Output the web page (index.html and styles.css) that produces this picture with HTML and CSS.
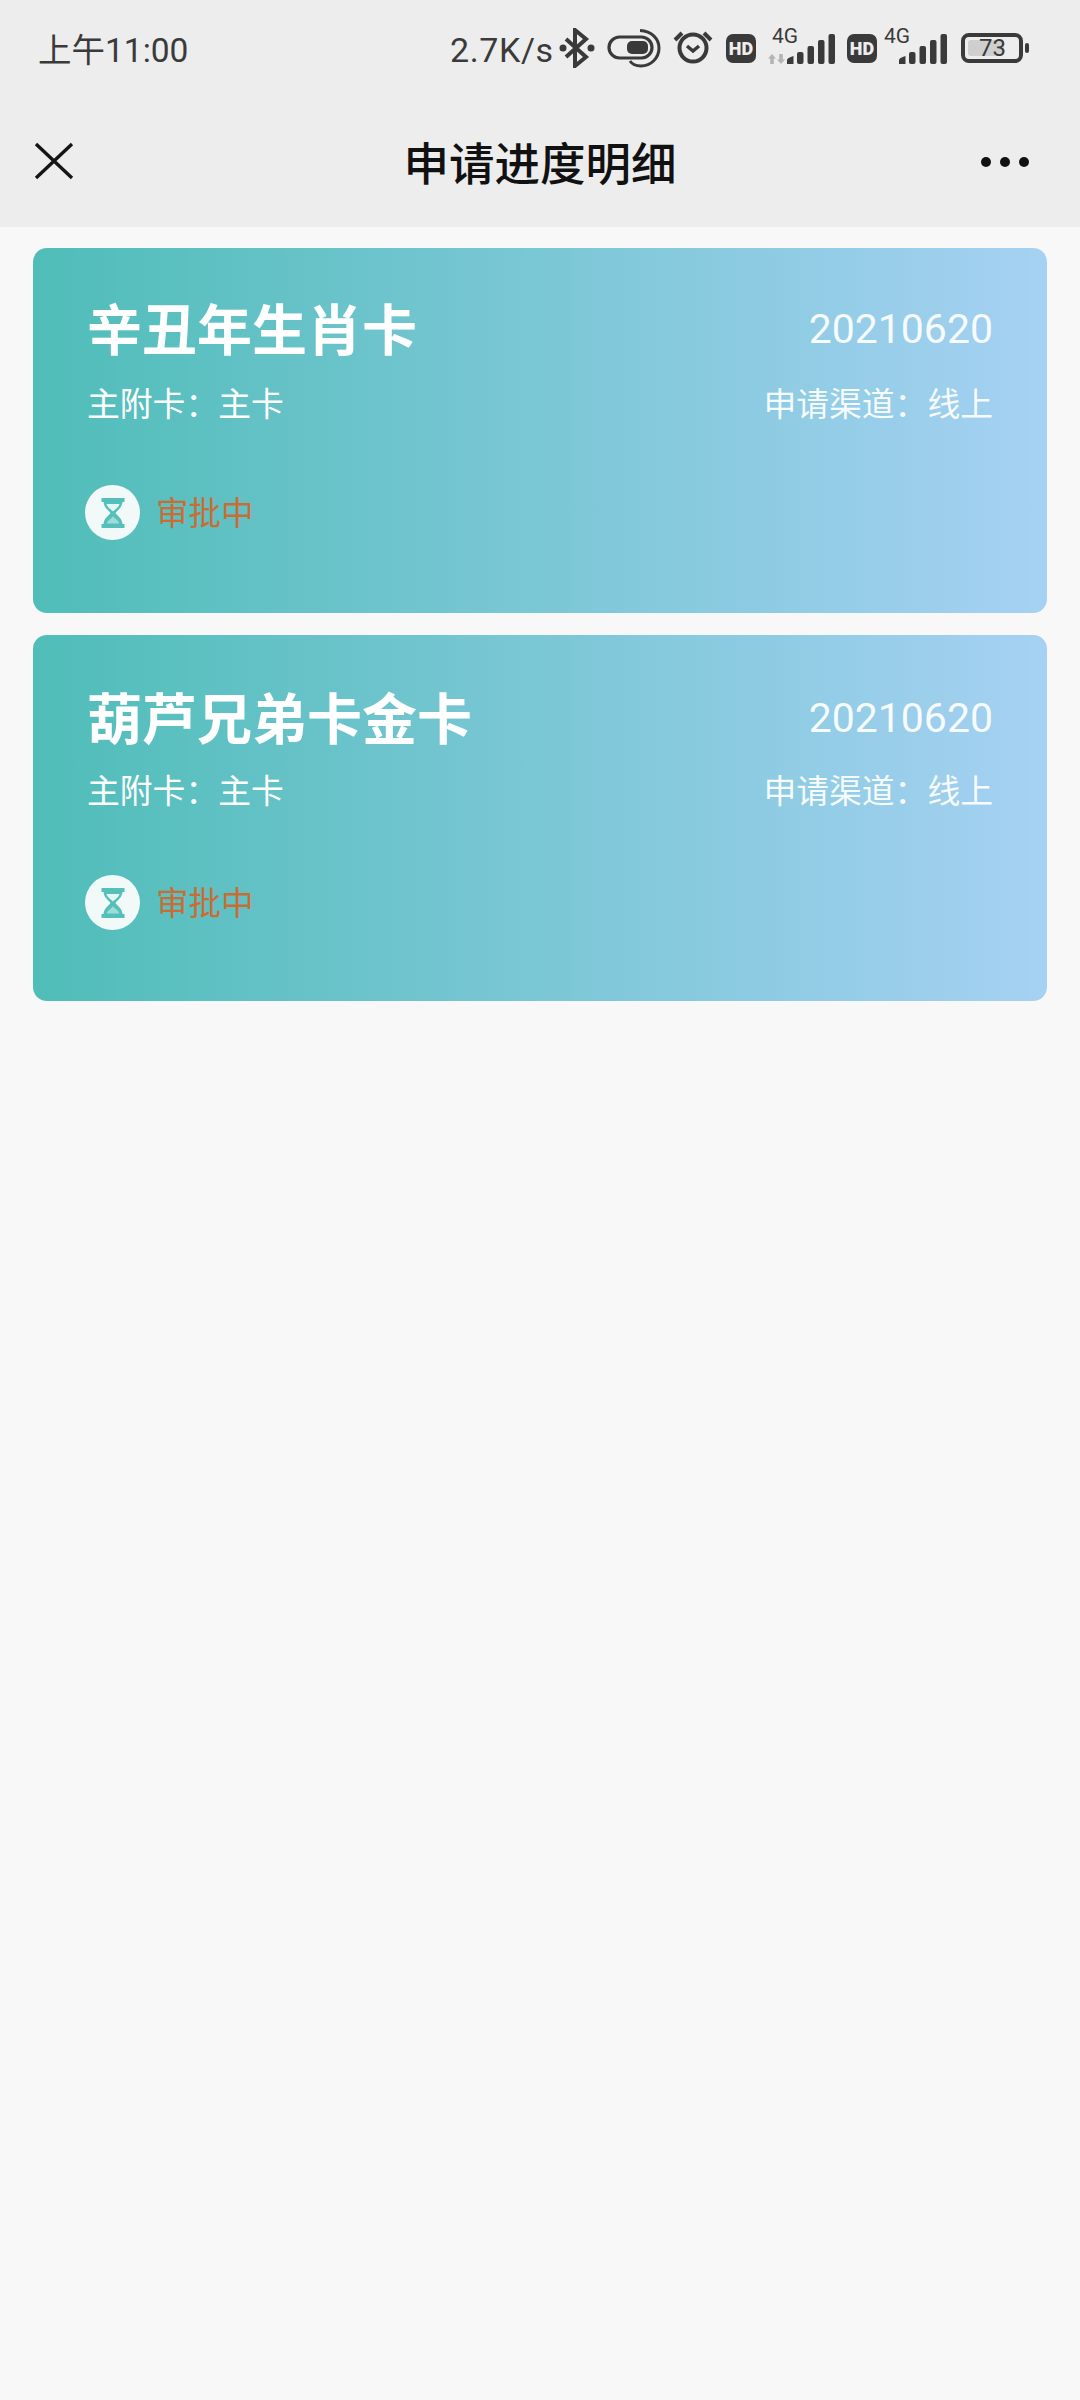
FILE: index.html
```html
<!DOCTYPE html>
<html lang="zh-CN">
<head>
<meta charset="utf-8">
<title>申请进度明细</title>
<link rel="stylesheet" href="styles.css">
</head>
<body>
<header class="top">
  <div class="status-bar">
    <span class="clock">上午11:00</span>
    <div class="status-icons">
      <span class="speed">2.7K/s</span>
      <svg class="ic ic-bt" viewBox="0 0 36 40"><path d="M7 11 L27 29 L16 38 V2 L27 11 L7 29" fill="none" stroke="#3a3a3a" stroke-width="4"/><circle cx="4" cy="20" r="3.5" fill="#3a3a3a"/><circle cx="32" cy="20" r="3.5" fill="#3a3a3a"/></svg>
      <svg class="ic ic-sw" viewBox="0 0 54 40"><rect x="2" y="9" width="43" height="21" rx="10.5" fill="none" stroke="#3a3a3a" stroke-width="3.2"/><rect x="20" y="13" width="21" height="13" rx="5" fill="#3a3a3a"/><path d="M33 2.5 C45 3 52 11 52 20 C52 30 44 38 34 38 C29 38 25 36 23 33" fill="none" stroke="#3a3a3a" stroke-width="3"/></svg>
      <svg class="ic ic-al" viewBox="0 0 40 36"><circle cx="20" cy="18" r="13.500" fill="none" stroke="#3a3a3a" stroke-width="4"/><path d="M14 16 L20 21 L26 16" fill="none" stroke="#3a3a3a" stroke-width="3.500"/><path d="M2 10 L9 3 M38 10 L31 3" stroke="#3a3a3a" stroke-width="4"/></svg>
      <span class="hd">HD</span>
      <div class="net">
        <span class="net-type">4G</span>
        <svg class="ic ic-arrows" viewBox="0 0 18 10"><path d="M4 0 L8 4.500 H5.800 V10 H2.200 V4.500 H0 Z M13 10 L9 5.500 H11.200 V0 H14.800 V5.500 H17 Z" fill="#b4b4b4"/></svg>
        <svg class="ic ic-sig" viewBox="0 0 48 30"><g fill="#3a3a3a"><path d="M0 30 V26 Q0 24 6.500 22 V30 Z"/><rect x="10" y="18" width="6.500" height="12" rx="2"/><rect x="20.500" y="12" width="6.500" height="18" rx="2"/><rect x="31" y="6" width="6.500" height="24" rx="2"/><rect x="41.500" y="0" width="6.500" height="30" rx="2"/></g></svg>
      </div>
      <span class="hd hd-second">HD</span>
      <div class="net net-second">
        <span class="net-type">4G</span>
        <svg class="ic ic-sig" viewBox="0 0 48 30"><g fill="#3a3a3a"><path d="M0 30 V26 Q0 24 6.500 22 V30 Z"/><rect x="10" y="18" width="6.500" height="12" rx="2"/><rect x="20.500" y="12" width="6.500" height="18" rx="2"/><rect x="31" y="6" width="6.500" height="24" rx="2"/><rect x="41.500" y="0" width="6.500" height="30" rx="2"/></g></svg>
      </div>
      <div class="battery"><span class="battery-level"></span><span class="battery-num">73</span></div>
      <span class="battery-nub"></span>
    </div>
  </div>
  <nav class="nav">
    <svg class="close" viewBox="0 0 40 38"><path d="M2 2 L38 36 M38 2 L2 36" stroke="#151515" stroke-width="3.400" fill="none"/></svg>
    <h1 class="nav-title">申请进度明细</h1>
    <div class="more"><i></i><i></i><i></i></div>
  </nav>
</header>
<main class="list">
  <article class="card">
    <div class="row">
      <h2 class="card-title">辛丑年生肖卡</h2>
      <span class="card-date">20210620</span>
    </div>
    <div class="row row-sub">
      <span>主附卡：主卡</span>
      <span>申请渠道：线上</span>
    </div>
    <div class="state">
      <span class="state-icon"><svg viewBox="0 0 24 30"><path fill="#55bfba" d="M0.500 0 H23.500 V4 H21.500 C21 10 16 12.500 14.500 15 C16 17.500 21 20 21.500 26 H23.500 V30 H0.500 V26 H2.500 C3 20 8 17.500 9.500 15 C8 12.500 3 10 2.500 4 H0.500 Z"/><path fill="#e6f5f5" d="M5.500 6 H18.500 C18 9 13.500 12 12 13.500 C10.500 12 6 9 5.500 6 Z"/><path fill="#9fdbd8" d="M12 18.500 C10 20.500 6.500 22.500 5.500 25.500 H18.500 C17.500 22.500 14 20.500 12 18.500 Z"/></svg></span>
      <span class="state-text">审批中</span>
    </div>
  </article>
  <article class="card card-second">
    <div class="row">
      <h2 class="card-title">葫芦兄弟卡金卡</h2>
      <span class="card-date">20210620</span>
    </div>
    <div class="row row-sub">
      <span>主附卡：主卡</span>
      <span>申请渠道：线上</span>
    </div>
    <div class="state">
      <span class="state-icon"><svg viewBox="0 0 24 30"><path fill="#55bfba" d="M0.500 0 H23.500 V4 H21.500 C21 10 16 12.500 14.500 15 C16 17.500 21 20 21.500 26 H23.500 V30 H0.500 V26 H2.500 C3 20 8 17.500 9.500 15 C8 12.500 3 10 2.500 4 H0.500 Z"/><path fill="#e6f5f5" d="M5.500 6 H18.500 C18 9 13.500 12 12 13.500 C10.500 12 6 9 5.500 6 Z"/><path fill="#9fdbd8" d="M12 18.500 C10 20.500 6.500 22.500 5.500 25.500 H18.500 C17.500 22.500 14 20.500 12 18.500 Z"/></svg></span>
      <span class="state-text">审批中</span>
    </div>
  </article>
</main>
</body>
</html>
```

FILE: styles.css
```css
* { box-sizing: border-box; }
html, body { margin: 0; padding: 0; }
body {
  width: 1080px;
  height: 2400px;
  background: #f8f8f8;
  font-family: Roboto, "Noto Sans CJK SC", sans-serif;
}
.top { background: #ededed; height: 227px; }
.status-bar {
  height: 96px;
  padding-left: 38px;
  display: flex;
  align-items: center;
  justify-content: space-between;
  color: #3a3a3a;
}
.clock { font-size: 33.500px; line-height: 40px; padding-top: 5px; }
.status-icons { display: flex; align-items: center; padding-right: 51px; height: 96px; }
.ic { display: block; flex: none; }
.speed { font-size: 34px; line-height: 40px; letter-spacing: .6px; width: 109px; padding-top: 4px; }
.ic-bt { width: 36px; height: 40px; }
.ic-sw { width: 54px; height: 40px; margin-left: 12px; }
.ic-al { width: 40px; height: 36px; margin-left: 12px; }
.hd {
  width: 30px;
  height: 29px;
  margin-left: 13px;
  border-radius: 7px;
  background: #3a3a3a;
  color: #ededed;
  font: 900 18px/29px Roboto, sans-serif;
  text-align: center;
}
.net { position: relative; width: 67px; height: 34px; margin: 0 0 2px 12px; }
.net-type { position: absolute; left: 4px; top: -3px; font-size: 21px; line-height: 18px; }
.ic-arrows { position: absolute; left: 0; bottom: 0; width: 18px; height: 10px; }
.ic-sig { position: absolute; right: 0; bottom: 0; width: 48px; height: 30px; }
.hd-second { margin-left: 12px; }
.net-second { width: 70px; margin-left: 0; }
.net-second .net-type { left: 7px; }
.battery {
  position: relative;
  width: 62px;
  height: 30px;
  margin-left: 14px;
  border: 4px solid #3a3a3a;
  border-radius: 8px;
}
.battery-level { position: absolute; left: 3px; top: 3px; bottom: 3px; width: 36px; background: #cfcfcf; border-radius: 3px; }
.battery-num { position: absolute; left: 1px; right: 0; top: 0; text-align: center; font-size: 24px; line-height: 22px; }
.battery-nub { width: 4px; height: 10px; margin-left: 2px; border-radius: 2px; background: #3a3a3a; }
.nav {
  position: relative;
  height: 131px;
  padding: 0 51px 0 34px;
  display: flex;
  align-items: center;
  justify-content: space-between;
}
.close { width: 40px; height: 38px; margin-top: -2px; }
.nav-title {
  position: absolute;
  left: 0;
  right: 0;
  top: 40px;
  margin: 0;
  text-align: center;
  font-size: 45.500px;
  line-height: 60px;
  font-weight: 500;
  color: #111;
}
.more { display: flex; gap: 9px; }
.more i { width: 10px; height: 10px; border-radius: 50%; background: #111; }
.list { padding: 21px 33px 0; display: flex; flex-direction: column; gap: 22px; }
.card {
  height: 365px;
  padding: 50px 54px 0 54px;
  border-radius: 14px;
  color: #fff;
  background: linear-gradient(90deg, #4fbdb8, #a6d1f3);
}
.card-second { height: 366px; padding-top: 52px; }
.row { display: flex; justify-content: space-between; align-items: center; }
.card-title { margin: 0; font-size: 55px; line-height: 66px; font-weight: 700; }
.card-date { font-size: 41px; line-height: 62px; margin-bottom: 4px; opacity: .92; }
.row-sub { margin-top: 19px; font-size: 32.800px; line-height: 44px; }
.card-second .row-sub { margin-top: 17px; }
.row-sub span:last-child { opacity: .92; }
.state { display: flex; align-items: center; margin-top: 58px; margin-left: -2px; }
.card-second .state { margin-top: 61px; }
.state-icon {
  width: 55px;
  height: 55px;
  border-radius: 50%;
  background: #f2f9f9;
  display: flex;
  align-items: center;
  justify-content: center;
}
.state-icon svg { width: 24px; height: 30px; display: block; }
.state-text { margin-left: 16px; padding-top: 3px; font-size: 32.500px; line-height: 44px; color: #c96d35; }
```
